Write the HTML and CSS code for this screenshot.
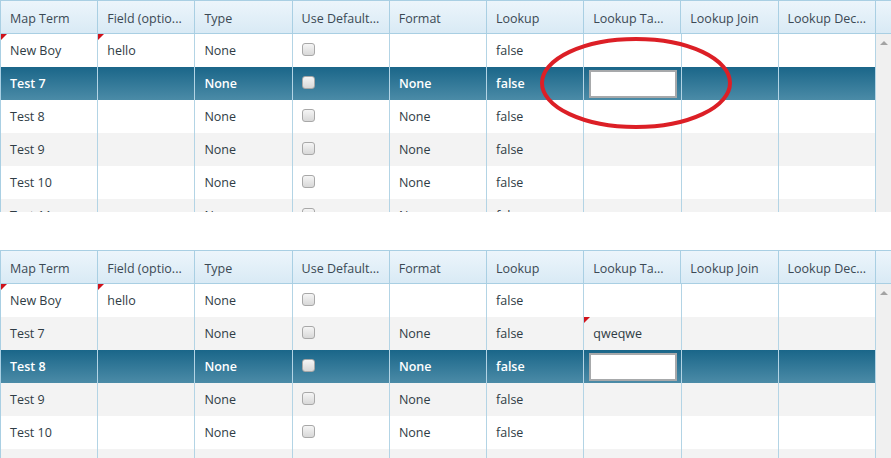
FILE: index.html
```html
<!DOCTYPE html>
<html lang="en">

<head>
    <meta charset="UTF-8">
    <meta name="viewport" content="width=device-width, initial-scale=1.0">
    <title>Field Mapping</title>
    <link rel="stylesheet" href="styles.css">
</head>

<body>
    <!-- first grid: editing Test 7 -->
    <div class="grid grid-top">
        <div class="grid-head">
            <div class="hcell">Map Term</div>
            <div class="hcell">Field (optio...</div>
            <div class="hcell">Type</div>
            <div class="hcell">Use Default...</div>
            <div class="hcell">Format</div>
            <div class="hcell">Lookup</div>
            <div class="hcell">Lookup Ta...</div>
            <div class="hcell">Lookup Join</div>
            <div class="hcell">Lookup Dec...</div>
            <div class="hcell hfill"></div>
        </div>
        <div class="grid-body">
            <div class="rows">
                <div class="row">
                    <div class="cell dirty">New Boy</div>
                    <div class="cell dirty">hello</div>
                    <div class="cell">None</div>
                    <div class="cell"><span class="chk"></span></div>
                    <div class="cell"></div>
                    <div class="cell">false</div>
                    <div class="cell"></div>
                    <div class="cell"></div>
                    <div class="cell"></div>
                </div>
                <div class="row selected">
                    <div class="cell">Test 7</div>
                    <div class="cell"></div>
                    <div class="cell">None</div>
                    <div class="cell"><span class="chk"></span></div>
                    <div class="cell">None</div>
                    <div class="cell">false</div>
                    <div class="cell"><input type="text" class="cell-editor"></div>
                    <div class="cell"></div>
                    <div class="cell"></div>
                </div>
                <div class="row">
                    <div class="cell">Test 8</div>
                    <div class="cell"></div>
                    <div class="cell">None</div>
                    <div class="cell"><span class="chk"></span></div>
                    <div class="cell">None</div>
                    <div class="cell">false</div>
                    <div class="cell"></div>
                    <div class="cell"></div>
                    <div class="cell"></div>
                </div>
                <div class="row alt">
                    <div class="cell">Test 9</div>
                    <div class="cell"></div>
                    <div class="cell">None</div>
                    <div class="cell"><span class="chk"></span></div>
                    <div class="cell">None</div>
                    <div class="cell">false</div>
                    <div class="cell"></div>
                    <div class="cell"></div>
                    <div class="cell"></div>
                </div>
                <div class="row">
                    <div class="cell">Test 10</div>
                    <div class="cell"></div>
                    <div class="cell">None</div>
                    <div class="cell"><span class="chk"></span></div>
                    <div class="cell">None</div>
                    <div class="cell">false</div>
                    <div class="cell"></div>
                    <div class="cell"></div>
                    <div class="cell"></div>
                </div>
                <div class="row alt">
                    <div class="cell">Test 11</div>
                    <div class="cell"></div>
                    <div class="cell">None</div>
                    <div class="cell"><span class="chk"></span></div>
                    <div class="cell">None</div>
                    <div class="cell">false</div>
                    <div class="cell"></div>
                    <div class="cell"></div>
                    <div class="cell"></div>
                </div>
            </div>
            <div class="vscroll"><span class="arrow-up"></span></div>
        </div>

        <!-- red marker around the lookup table editor -->
        <svg class="marker" width="200" height="96" viewBox="0 0 200 96">
            <ellipse cx="97" cy="47" rx="94" ry="44" fill="none" stroke="#dc1f26" stroke-width="4"/>
        </svg>
    </div>

    <!-- second grid: Test 7 saved, editing Test 8 -->
    <div class="grid grid-bottom">
        <div class="grid-head">
            <div class="hcell">Map Term</div>
            <div class="hcell">Field (optio...</div>
            <div class="hcell">Type</div>
            <div class="hcell">Use Default...</div>
            <div class="hcell">Format</div>
            <div class="hcell">Lookup</div>
            <div class="hcell">Lookup Ta...</div>
            <div class="hcell">Lookup Join</div>
            <div class="hcell">Lookup Dec...</div>
            <div class="hcell hfill"></div>
        </div>
        <div class="grid-body">
            <div class="rows">
                <div class="row">
                    <div class="cell dirty">New Boy</div>
                    <div class="cell dirty">hello</div>
                    <div class="cell">None</div>
                    <div class="cell"><span class="chk"></span></div>
                    <div class="cell"></div>
                    <div class="cell">false</div>
                    <div class="cell"></div>
                    <div class="cell"></div>
                    <div class="cell"></div>
                </div>
                <div class="row alt">
                    <div class="cell">Test 7</div>
                    <div class="cell"></div>
                    <div class="cell">None</div>
                    <div class="cell"><span class="chk"></span></div>
                    <div class="cell">None</div>
                    <div class="cell">false</div>
                    <div class="cell dirty">qweqwe</div>
                    <div class="cell"></div>
                    <div class="cell"></div>
                </div>
                <div class="row selected">
                    <div class="cell">Test 8</div>
                    <div class="cell"></div>
                    <div class="cell">None</div>
                    <div class="cell"><span class="chk"></span></div>
                    <div class="cell">None</div>
                    <div class="cell">false</div>
                    <div class="cell"><input type="text" class="cell-editor"></div>
                    <div class="cell"></div>
                    <div class="cell"></div>
                </div>
                <div class="row alt">
                    <div class="cell">Test 9</div>
                    <div class="cell"></div>
                    <div class="cell">None</div>
                    <div class="cell"><span class="chk"></span></div>
                    <div class="cell">None</div>
                    <div class="cell">false</div>
                    <div class="cell"></div>
                    <div class="cell"></div>
                    <div class="cell"></div>
                </div>
                <div class="row">
                    <div class="cell">Test 10</div>
                    <div class="cell"></div>
                    <div class="cell">None</div>
                    <div class="cell"><span class="chk"></span></div>
                    <div class="cell">None</div>
                    <div class="cell">false</div>
                    <div class="cell"></div>
                    <div class="cell"></div>
                    <div class="cell"></div>
                </div>
                <div class="row alt">
                    <div class="cell">Test 11</div>
                    <div class="cell"></div>
                    <div class="cell">None</div>
                    <div class="cell"><span class="chk"></span></div>
                    <div class="cell">None</div>
                    <div class="cell">false</div>
                    <div class="cell"></div>
                    <div class="cell"></div>
                    <div class="cell"></div>
                </div>
            </div>
            <div class="vscroll"><span class="arrow-up"></span></div>
        </div>
    </div>
</body>

</html>
```

FILE: styles.css
```css
body {
    margin: 0;
    background: #fff;
    font-family: "Open Sans", "Liberation Sans", sans-serif;
    font-size: 12.5px;
    color: #2f3c45;
    overflow: hidden;
}

.grid {
    position: relative;
    width: 891px;
    border-top: 1px solid #a9cfe3;
    border-left: 1px solid #a9cfe3;
    box-sizing: border-box;
}

.grid-bottom {
    margin-top: 38px;
}

/* Header row */
.grid-head {
    display: flex;
    height: 32px;
    border-bottom: 1px solid #a9cfe3;
    background: linear-gradient(#ecf5fb, #d9eaf5);
}

.hcell {
    flex: 0 0 97.2px;
    box-sizing: border-box;
    border-right: 1px solid #a9cfe3;
    padding: 3px 0 0 9px;
    display: flex;
    align-items: center;
    white-space: nowrap;
    overflow: hidden;
    color: #3b4954;
}

.hcell.hfill {
    flex: 1;
    border-right: none;
}

/* Body with rows and the vertical scroll track */
.grid-body {
    display: flex;
    height: 178px;
    overflow: hidden;
}

.grid-bottom .grid-body {
    height: 240px;
}

.rows {
    flex: 1;
}

.row {
    display: grid;
    grid-template-columns: repeat(9, 1fr);
    height: 33px;
    background: #fff;
}

.row.alt {
    background: #f3f3f3;
}

.row.selected {
    background: linear-gradient(#1a6689, #4b8ba7);
    color: #fff;
    font-weight: 600;
}

.cell {
    position: relative;
    box-sizing: border-box;
    border-right: 1px solid #b3d4e5;
    padding: 0 0 0 9px;
    display: flex;
    align-items: center;
    white-space: nowrap;
    overflow: hidden;
}

/* red corner marks a changed value */
.cell.dirty::before {
    content: "";
    position: absolute;
    left: 0;
    top: 0;
    border-top: 6px solid #d0121b;
    border-right: 6px solid transparent;
}

.chk {
    width: 11px;
    height: 11px;
    margin-top: -3px;
    border: 1px solid #a8a8a8;
    border-radius: 3px;
    background: linear-gradient(#f5f5f5, #d8d8d8);
}

.cell-editor {
    width: 88px;
    height: 28px;
    margin-left: -4px;
    box-sizing: border-box;
    border: 2px solid #a7a9ab;
    background: #fff;
    padding: 0 4px;
    font-family: inherit;
    font-size: 12.5px;
}

.vscroll {
    flex: 0 0 15px;
    background: #f0f0f0;
    display: flex;
    justify-content: center;
    padding-top: 7px;
    box-sizing: border-box;
}

.arrow-up {
    width: 0;
    height: 0;
    border-left: 4px solid transparent;
    border-right: 4px solid transparent;
    border-bottom: 4px solid #a3a3a3;
}

.marker {
    position: absolute;
    left: 538px;
    top: 35px;
    pointer-events: none;
}
```
